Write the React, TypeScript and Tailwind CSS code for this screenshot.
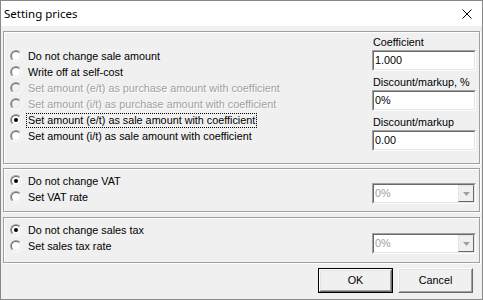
import clsx from "clsx";

const font = { fontFamily: '"Liberation Sans", Arial, sans-serif' };

interface RadioProps {
  label: string;
  checked?: boolean;
  disabled?: boolean;
  focused?: boolean;
}

function RadioCircle({ checked, disabled }: { checked?: boolean; disabled?: boolean }) {
  return (
    <span className="flex h-[12px] w-[12px] shrink-0 rounded-full border border-t-[#a0a0a0] border-l-[#a0a0a0] border-b-white border-r-white">
      <span
        className={clsx(
          "flex h-full w-full items-center justify-center rounded-full border border-t-[#696969] border-l-[#696969] border-b-[#e3e3e3] border-r-[#e3e3e3]",
          disabled ? "bg-[#f0f0f0]" : "bg-white"
        )}
      >
        {checked && <span className="h-[4px] w-[4px] rounded-full bg-black" />}
      </span>
    </span>
  );
}

function Radio({ label, checked, disabled, focused }: RadioProps) {
  return (
    <div className="flex h-[16px] items-center">
      <RadioCircle checked={checked} disabled={disabled} />
      <span
        className={clsx(
          "ml-[4px] whitespace-nowrap px-[1px] text-[10.8px] leading-[13px]",
          disabled ? "text-[#a0a0a0] [text-shadow:1px_1px_0_#fff]" : "text-black",
          focused ? "border border-dotted border-black" : "border border-transparent"
        )}
      >
        {label}
      </span>
    </div>
  );
}

function Sunken({ children, className }: { children: React.ReactNode; className?: string }) {
  return (
    <div
      className={clsx(
        "h-[21px] w-[104px] border border-t-[#a0a0a0] border-l-[#a0a0a0] border-b-white border-r-white",
        className
      )}
    >
      <div className="flex h-full w-full items-center border border-t-[#696969] border-l-[#696969] border-b-[#e3e3e3] border-r-[#e3e3e3] bg-white">
        {children}
      </div>
    </div>
  );
}

function Edit({ value }: { value: string }) {
  return (
    <Sunken>
      <span className="pl-[1px] text-[10.8px] text-black">{value}</span>
    </Sunken>
  );
}

function Combo({ value }: { value: string }) {
  return (
    <Sunken>
      <span className="flex-1 pl-[1px] text-[10.8px] text-[#a0a0a0]">{value}</span>
      <span className="flex h-full w-[16px] items-center justify-center border border-t-[#e3e3e3] border-l-[#e3e3e3] border-b-[#696969] border-r-[#696969] bg-[#f0f0f0]">
        <svg width="7" height="4" viewBox="0 0 7 4">
          <polygon points="0,0 7,0 3.5,4" fill="#a0a0a0" />
        </svg>
      </span>
    </Sunken>
  );
}

function Button({ label, isDefault }: { label: string; isDefault?: boolean }) {
  return (
    <div className={clsx("h-[25px] w-[75px]", isDefault ? "border border-black" : "")}>
      <div className="h-full w-full border border-t-white border-l-white border-b-[#696969] border-r-[#696969]">
        <div className="flex h-full w-full items-center justify-center border border-t-[#e3e3e3] border-l-[#e3e3e3] border-b-[#a0a0a0] border-r-[#a0a0a0] bg-[#f0f0f0] text-[10.8px] text-black">
          {label}
        </div>
      </div>
    </div>
  );
}

const panel =
  "border border-[#a0a0a0] shadow-[inset_1px_1px_0_#fff,1px_1px_0_#fff]";

export default function App() {
  return (
    <div
      className="flex h-[300px] w-[483px] flex-col border border-[#888888] bg-[#f0f0f0]"
      style={font}
    >
      <div className="flex h-[25px] shrink-0 items-center justify-between bg-white pl-[3px] pr-[10px]">
        <span
          className="text-[11.5px] text-black"
          style={{ fontFamily: '"Noto Sans", "Open Sans", sans-serif' }}
        >
          Setting prices
        </span>
        <svg width="10" height="10" viewBox="0 0 10 10">
          <path d="M0.5 0.5 L9.5 9.5 M9.5 0.5 L0.5 9.5" stroke="#000" strokeWidth="1" />
        </svg>
      </div>

      <div className="flex flex-1 flex-col px-[2px] pt-[5px]">
        <div className={clsx(panel, "flex h-[133px] justify-between")}>
          <div className="flex flex-col pl-[6px] pt-[16px]">
            <Radio label="Do not change sale amount" />
            <Radio label="Write off at self-cost" />
            <Radio label="Set amount (e/t) as purchase amount with coefficient" disabled />
            <Radio label="Set amount (i/t) as purchase amount with coefficient" disabled />
            <Radio label="Set amount (e/t) as sale amount with coefficient" checked focused />
            <Radio label="Set amount (i/t) as sale amount with coefficient" />
          </div>
          <div className="flex flex-col pr-[3px] pt-[4px]">
            <span className="h-[13px] pl-[1px] text-[10.8px] leading-[13px]">Coefficient</span>
            <div className="mt-[1px]">
              <Edit value="1.000" />
            </div>
            <span className="mt-[5px] h-[13px] pl-[1px] text-[10.8px] leading-[13px]">
              Discount/markup, %
            </span>
            <div className="mt-[1px]">
              <Edit value="0%" />
            </div>
            <span className="mt-[5px] h-[13px] pl-[1px] text-[10.8px] leading-[13px]">
              Discount/markup
            </span>
            <div className="mt-[1px]">
              <Edit value="0.00" />
            </div>
          </div>
        </div>

        <div className={clsx(panel, "mt-[4px] flex h-[44px] justify-between")}>
          <div className="flex flex-col pl-[6px] pt-[4px]">
            <Radio label="Do not change VAT" checked />
            <Radio label="Set VAT rate" />
          </div>
          <div className="pr-[3px] pt-[14px]">
            <Combo value="0%" />
          </div>
        </div>

        <div className={clsx(panel, "mt-[5px] flex h-[46px] justify-between")}>
          <div className="flex flex-col pl-[6px] pt-[4px]">
            <Radio label="Do not change sales tax" checked />
            <Radio label="Set sales tax rate" />
          </div>
          <div className="pr-[3px] pt-[15px]">
            <Combo value="0%" />
          </div>
        </div>

        <div className="mt-[5px] flex justify-end gap-[5px] pr-[7px]">
          <Button label="OK" isDefault />
          <Button label="Cancel" />
        </div>
      </div>
    </div>
  );
}
